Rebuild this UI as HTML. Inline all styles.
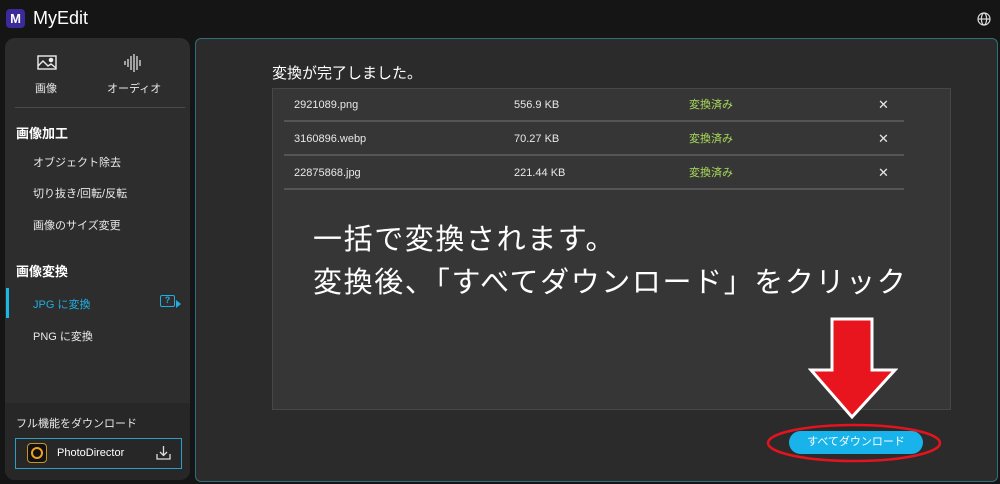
<!DOCTYPE html>
<html><head><meta charset="utf-8"><style>
*{margin:0;padding:0;box-sizing:border-box}
body{width:1000px;height:484px;background:#151515;font-family:"Liberation Sans","Noto Sans CJK JP",sans-serif;color:#e8e8e8;position:relative;overflow:hidden}
.abs{position:absolute}
.side{left:5px;top:38px;width:185px;height:442px;background:#2d2d2d;border-radius:10px;overflow:hidden}
.main{left:195px;top:38px;width:803px;height:444px;background:#2b2b2b;border:1px solid #2f6f7c;border-radius:6px}
.card{left:272px;top:88px;width:679px;height:322px;background:#363636;border:1px solid #474747}
.row{position:absolute;left:11px;width:620px;height:33px;border-bottom:2px solid #555;font-size:11px}
.row span{position:absolute;top:9px;line-height:14px}
.big{left:313px;font-size:29px;line-height:36px;color:#fff;letter-spacing:1.6px;white-space:nowrap}
</style></head><body>
<div class="abs" style="left:6px;top:9px;width:19px;height:19px;background:#3b2a9a;border-radius:4px;color:#fff;font-size:13px;font-weight:bold;text-align:center;line-height:19px">M</div>
<div class="abs" style="left:33px;top:8px;font-size:18px;color:#fff">MyEdit</div>
<svg class="abs" style="left:977px;top:12px" width="14" height="14" viewBox="0 0 14 14" fill="none" stroke="#ddd" stroke-width="1.2"><circle cx="7" cy="7" r="6"/><ellipse cx="7" cy="7" rx="2.6" ry="6"/><line x1="1" y1="7" x2="13" y2="7"/></svg>

<div class="abs side">
 <svg class="abs" style="left:32px;top:17px" width="20" height="16" viewBox="0 0 20 16" fill="none" stroke="#eee" stroke-width="1.4"><rect x="1" y="1" width="18" height="13"/><path d="M1 11l5-5 5 5 3-2 5 4"/><circle cx="14" cy="5" r="1.6" fill="#eee"/></svg>
 <div class="abs" style="left:30px;top:42px;font-size:11px">画像</div>
 <svg class="abs" style="left:118px;top:15px" width="20" height="20" viewBox="0 0 20 20" stroke="#eee" stroke-width="1.2"><path d="M2 8v4M5 6v8M8 3v14M11 1v18M14 3v14M17 7v6"/></svg>
 <div class="abs" style="left:102px;top:42px;font-size:11px">オーディオ</div>
 <div class="abs" style="left:10px;top:69px;width:170px;height:1px;background:#4a4a4a"></div>
 <div class="abs" style="left:11px;top:85px;font-size:13px;font-weight:bold;color:#fff">画像加工</div>
 <div class="abs" style="left:28px;top:116px;font-size:11px">オブジェクト除去</div>
 <div class="abs" style="left:28px;top:147px;font-size:11px">切り抜き/回転/反転</div>
 <div class="abs" style="left:28px;top:179px;font-size:11px">画像のサイズ変更</div>
 <div class="abs" style="left:11px;top:223px;font-size:13px;font-weight:bold;color:#fff">画像変換</div>
 <div class="abs" style="left:1px;top:250px;width:3px;height:30px;background:#19b6e6"></div>
 <div class="abs" style="left:28px;top:258px;font-size:11px;color:#22aee0">JPG に変換</div>
 <div class="abs" style="left:155px;top:257px;width:15px;height:12px;border:1.5px solid #22aee0;border-radius:2px;font-size:9px;color:#22aee0;text-align:center;line-height:9px;font-weight:bold">?</div>
 <div class="abs" style="left:171px;top:262px;width:0;height:0;border-left:5px solid #22aee0;border-top:4px solid transparent;border-bottom:4px solid transparent"></div>
 <div class="abs" style="left:28px;top:290px;font-size:11px">PNG に変換</div>
 <div class="abs" style="left:0;top:365px;width:185px;height:77px;background:#272727"></div>
 <div class="abs" style="left:11px;top:377px;font-size:11px">フル機能をダウンロード</div>
 <div class="abs" style="left:10px;top:400px;width:167px;height:31px;border:1.5px solid #2a9fc8"></div>
 <div class="abs" style="left:22px;top:405px;width:20px;height:20px;background:#111;border:1px solid #c8932d;border-radius:4px"><div style="margin:3px;width:12px;height:12px;border:2px solid #f0a020;border-radius:50%"></div></div>
 <div class="abs" style="left:52px;top:409px;font-size:11px;color:#fff">PhotoDirector</div>
 <svg class="abs" style="left:151px;top:407px" width="15" height="15" viewBox="0 0 15 15" fill="none" stroke="#ddd" stroke-width="1.3"><path d="M7.5 1v9M4 7l3.5 3.5L11 7M1 9v5h13V9"/></svg>
</div>

<div class="abs main"></div>
<div class="abs" style="left:272px;top:62px;font-size:15px;color:#fff">変換が完了しました。</div>
<div class="abs card">
 <div class="row" style="top:0"><span style="left:10px">2921089.png</span><span style="left:230px">556.9 KB</span><span style="left:405px;color:#a8d85a">変換済み</span><span style="left:594px;font-size:13px">✕</span></div>
 <div class="row" style="top:34px"><span style="left:10px">3160896.webp</span><span style="left:230px">70.27 KB</span><span style="left:405px;color:#a8d85a">変換済み</span><span style="left:594px;font-size:13px">✕</span></div>
 <div class="row" style="top:68px"><span style="left:10px">22875868.jpg</span><span style="left:230px">221.44 KB</span><span style="left:405px;color:#a8d85a">変換済み</span><span style="left:594px;font-size:13px">✕</span></div>
</div>
<div class="abs big" style="top:222px">一括で変換されます。</div>
<div class="abs big" style="top:265px">変換後、「すべてダウンロード」をクリック</div>
<svg class="abs" style="left:808px;top:316px" width="90" height="104" viewBox="0 0 90 104"><path d="M24 3h40v51h23L44 101 3 54h21z" fill="#e8141e" stroke="#fff" stroke-width="3" stroke-linejoin="miter"/></svg>
<svg class="abs" style="left:765px;top:422px" width="178" height="42" viewBox="0 0 178 42"><ellipse cx="89" cy="21" rx="86" ry="18" fill="none" stroke="#e3141e" stroke-width="2.5"/></svg>
<div class="abs" style="left:789px;top:431px;width:134px;height:23px;background:#17b3ea;border-radius:12px;font-size:11px;color:#fff;text-align:center;line-height:23px">すべてダウンロード</div>
</body></html>
